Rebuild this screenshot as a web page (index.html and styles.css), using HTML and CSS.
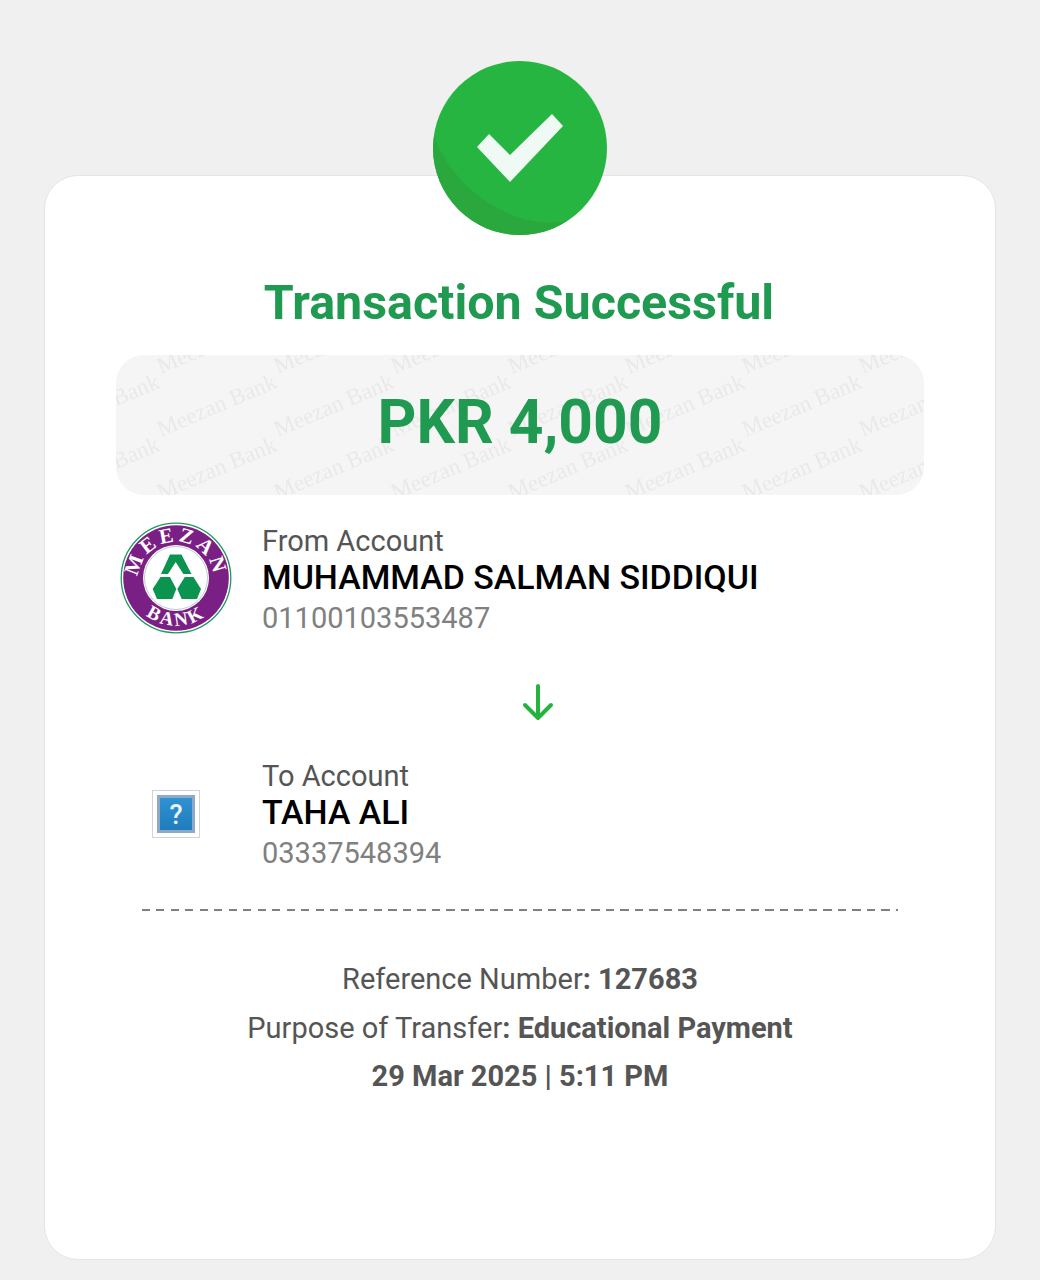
FILE: index.html
```html
<!DOCTYPE html>
<html lang="en">
<head>
    <meta charset="UTF-8">
    <title>Transaction Successful</title>
    <link rel="stylesheet" href="styles.css">
</head>
<body>

<div class="card">
    <svg class="badge" viewBox="0 0 174 174" width="174" height="174">
        <circle cx="87" cy="87" r="87" fill="#26b540"/>
        <path d="M1 76 C14 108 40 140 87 157 C102 162 118 163 134 160 A87 87 0 0 1 87 174 A87 87 0 0 1 0 87 Q0 81 1 76 Z" fill="#2aa73d"/>
        <polygon points="44,86 56,73 77,94 119,53 130,65 77,121" fill="#f0faf4"/>
    </svg>

    <h1 class="title">Transaction Successful</h1>

    <div class="amount-box">
        <svg class="watermark" width="808" height="140">
            <defs>
                <text id="wm-line" x="10" y="50" class="wm-text" transform="rotate(-23 10 50)">Meezan Bank</text>
                <pattern id="wm" width="117" height="63" patternUnits="userSpaceOnUse" x="35" y="32">
                    <use href="#wm-line"/>
                    <use href="#wm-line" x="-117"/>
                    <use href="#wm-line" y="63"/>
                    <use href="#wm-line" x="-117" y="63"/>
                </pattern>
            </defs>
            <rect width="808" height="140" fill="url(#wm)"/>
        </svg>
        <span class="amount">PKR 4,000</span>
    </div>

    <div class="account account-from">
        <div class="account-icon">
            <svg class="bank-logo" viewBox="0 0 112 112" width="112" height="112">
                <defs>
                    <path id="arc-top" d="M23 75 A37.5 37.5 0 1 1 89 75"/>
                    <path id="arc-bottom" d="M7.7 65 A49.5 49.5 0 0 0 104.3 65"/>
                </defs>
                <circle cx="56" cy="56" r="55.5" fill="#fff"/>
                <circle cx="56" cy="56" r="54.8" fill="none" stroke="#1f9560" stroke-width="1.3"/>
                <circle cx="56" cy="56" r="52.8" fill="#7a2085"/>
                <circle cx="56" cy="56" r="33" fill="#fff"/>
                <circle cx="56" cy="56" r="31.5" fill="none" stroke="#9fb9b0" stroke-width="0.7"/>
                <text class="logo-text logo-top"><textPath href="#arc-top" startOffset="50%" text-anchor="middle">MEEZAN</textPath></text>
                <text class="logo-text logo-bottom"><textPath href="#arc-bottom" startOffset="50%" text-anchor="middle">BANK</textPath></text>
                <polygon points="50,32.4 61.4,32.4 71.5,52 63.4,52 55.7,40 48,52 41,52" fill="#0a9450"/>
                <polygon points="40.5,55 50,55 56.3,67 52.3,77 37,77 32.7,67" fill="#0a9450"/>
                <polygon points="64.8,55 73.5,55 81,67 77,77 61.7,77 57.3,67" fill="#0a9450"/>
            </svg>
        </div>
        <div class="account-text">
            <div class="account-label">From Account</div>
            <div class="account-name">MUHAMMAD SALMAN SIDDIQUI</div>
            <div class="account-number">01100103553487</div>
        </div>
    </div>

    <div class="arrow-row">
        <svg viewBox="0 0 32 38" width="32" height="38">
            <path d="M16 3 V35 M3 22 L16 35 L29 22" fill="none" stroke="#25b33f" stroke-width="4" stroke-linecap="round" stroke-linejoin="round"/>
        </svg>
    </div>

    <div class="account account-to">
        <div class="account-icon">
            <div class="unknown-icon"><div class="unknown-inner">?</div></div>
        </div>
        <div class="account-text">
            <div class="account-label">To Account</div>
            <div class="account-name">TAHA ALI</div>
            <div class="account-number">03337548394</div>
        </div>
    </div>

    <div class="divider"></div>

    <div class="details">
        <div>Reference Number<b>: 127683</b></div>
        <div>Purpose of Transfer<b>: Educational Payment</b></div>
        <div><b>29 Mar 2025 | 5:11 PM</b></div>
    </div>
</div>

</body>
</html>
```

FILE: styles.css
```css
/* === Receipt page === */
body {
  margin: 0;
  background: #f0f0f0;
  font-family: Roboto, "Liberation Sans", sans-serif;
  height: 1280px;
  overflow: hidden;
}

.card {
  box-sizing: border-box;
  width: 952px;
  height: 1085px;
  margin: 175px 0 0 44px;
  background: #fff;
  border: 1px solid #e5e5e5;
  border-radius: 34px;
  display: flex;
  flex-direction: column;
  align-items: center;
}

.badge {
  display: block;
  margin-top: -115px;
  flex: none;
}

.title {
  margin: 36px 0 0;
  padding-right: 2px;
  font-size: 48.4px;
  line-height: 64px;
  font-weight: 700;
  color: #1f9a50;
}

.amount-box {
  box-sizing: border-box;
  position: relative;
  width: 808px;
  height: 140px;
  margin-top: 20px;
  padding-bottom: 6px;
  background: #f5f5f5;
  border-radius: 28px;
  overflow: hidden;
  display: flex;
  align-items: center;
  justify-content: center;
}

.watermark {
  position: absolute;
  left: 0;
  top: 0;
}

.wm-text {
  font-family: "Liberation Serif", serif;
  font-size: 23px;
  fill: #e9e9e9;
}

.amount {
  position: relative;
  font-size: 60.5px;
  font-weight: 700;
  color: #1f9a50;
}

.account {
  width: 808px;
  display: flex;
  align-items: center;
}

.account-from {
  margin-top: 27px;
}

.account-from .account-icon {
  margin-bottom: 6px;
}

.account-to {
  margin-top: 37px;
}

.account-to .account-icon {
  margin-bottom: 4px;
}

.account-icon {
  width: 146px;
  flex: none;
  display: flex;
  padding-left: 4px;
  box-sizing: border-box;
}

.bank-logo {
  display: block;
}

.logo-text {
  font-family: "Liberation Serif", serif;
  font-weight: 700;
  fill: #fff;
}

.logo-top {
  font-size: 21px;
  letter-spacing: 3.5px;
}

.logo-bottom {
  font-size: 19px;
  letter-spacing: 2.5px;
}

.account-label {
  font-size: 29px;
  line-height: 36px;
  color: #555;
}

.account-name {
  font-size: 33.9px;
  line-height: 38px;
  font-weight: 500;
  color: #000;
}

.account-number {
  font-size: 29px;
  line-height: 42px;
  color: #808080;
}

.arrow-row {
  width: 808px;
  margin-top: 43px;
  padding-left: 406px;
  box-sizing: border-box;
  height: 38px;
}

.arrow-row svg {
  display: block;
}

.unknown-icon {
  box-sizing: border-box;
  width: 48px;
  height: 48px;
  margin-left: 32px;
  padding: 4px;
  background: #fff;
  border: 1px solid #cfd4da;
}

.unknown-inner {
  box-sizing: border-box;
  width: 100%;
  height: 100%;
  background: linear-gradient(#2f92d2, #1f7cbc);
  border: 3px solid #8ea9c6;
  color: #e8f3fa;
  font-size: 27px;
  font-weight: 500;
  line-height: 34px;
  text-align: center;
}

.divider {
  width: 756px;
  height: 2px;
  margin-top: 35px;
  background: repeating-linear-gradient(to right, #808080 0 8px, transparent 8px 14.5px);
}

.details {
  margin-top: 44px;
  text-align: center;
  font-size: 29px;
  line-height: 48.5px;
  color: #555;
}

.details b {
  font-weight: 700;
}
```
